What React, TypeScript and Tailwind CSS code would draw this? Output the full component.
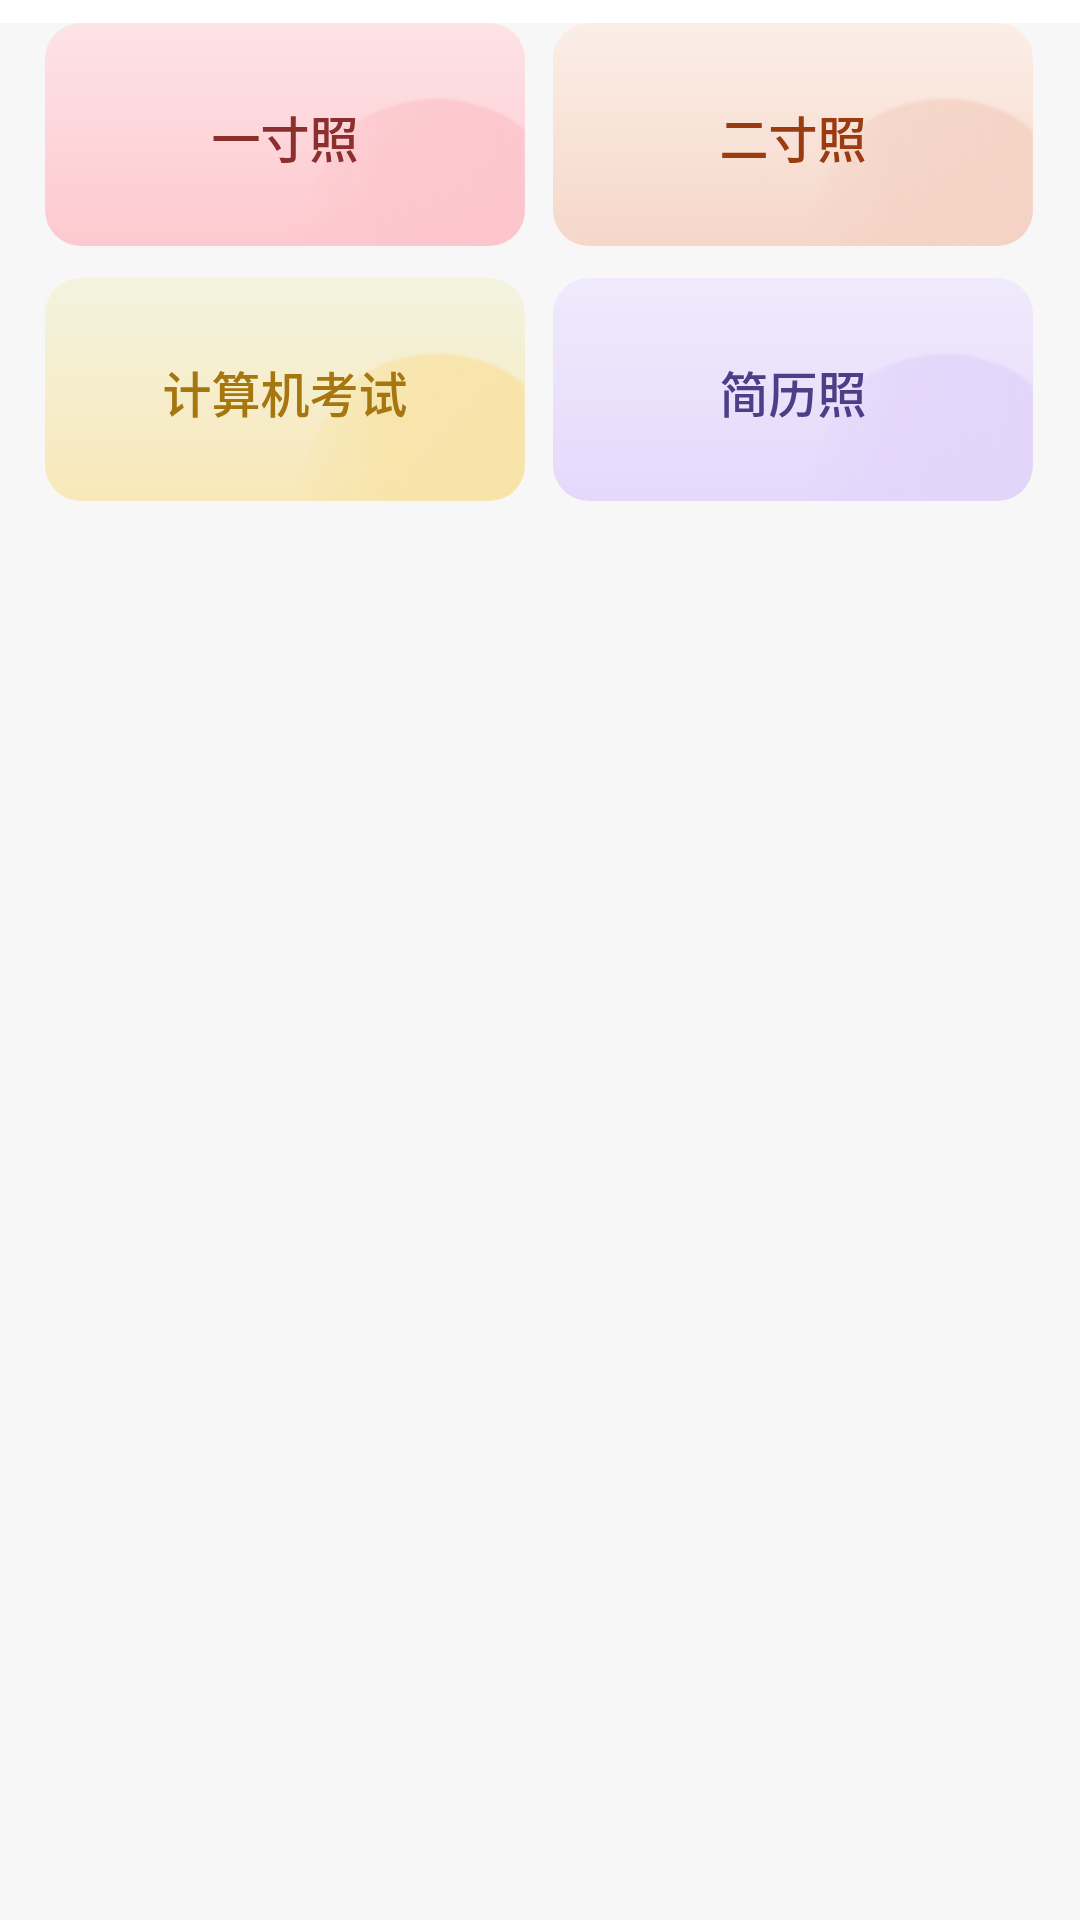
const cards = [
  {
    title: '一寸照',
    bg: 'bg-gradient-to-b from-[#fde3e6] to-[#fdc9cf]',
    text: 'text-[#8c2f2f]',
    wave: '#fcc5cb',
  },
  {
    title: '二寸照',
    bg: 'bg-gradient-to-b from-[#fbeee7] to-[#f6d7c9]',
    text: 'text-[#9a3b12]',
    wave: '#f4d2c4',
  },
  {
    title: '计算机考试',
    bg: 'bg-gradient-to-b from-[#f3f3df] to-[#f9e8b9]',
    text: 'text-[#a6760f]',
    wave: '#f8e3a6',
  },
  {
    title: '简历照',
    bg: 'bg-gradient-to-b from-[#f0eafc] to-[#e5d9fb]',
    text: 'text-[#4e3e87]',
    wave: '#e3d4fa',
  },
];

function Wave({ color, id }: { color: string; id: string }) {
  return (
    <svg
      className="absolute inset-0 h-full w-full"
      viewBox="0 0 480 222"
      preserveAspectRatio="none"
    >
      <defs>
        <linearGradient id={`g-${id}`} x1="0" y1="0" x2="1" y2="0">
          <stop offset="0" stopColor={color} stopOpacity="0" />
          <stop offset="0.4" stopColor={color} stopOpacity="0.75" />
          <stop offset="1" stopColor={color} stopOpacity="0.9" />
        </linearGradient>
        <filter id={`b-${id}`} x="-10%" y="-10%" width="120%" height="120%">
          <feGaussianBlur stdDeviation="1.5" />
        </filter>
      </defs>
      <path
        d="M240 222 C 262 180, 282 120, 314 98 C 345 78, 380 74, 405 76 C 440 80, 468 94, 480 108 L 480 222 Z"
        fill={`url(#g-${id})`}
        filter={`url(#b-${id})`}
      />
    </svg>
  );
}

export default function App() {
  return (
    <div className="min-h-screen bg-[#f7f7f7] font-['Noto_Sans_CJK_SC',sans-serif]">
      <div className="h-[23px] bg-white" />
      <div className="grid grid-cols-2 gap-x-[28px] gap-y-[32px] pl-[45px] pr-[47px]">
        {cards.map((c, i) => (
          <div
            key={c.title}
            className={`relative flex h-[223px] items-center justify-center overflow-hidden rounded-[36px] ${c.bg}`}
          >
            <Wave color={c.wave} id={String(i)} />
            <span className={`relative pt-1 text-[49px] font-medium leading-none ${c.text}`}>
              {c.title}
            </span>
          </div>
        ))}
      </div>
    </div>
  );
}
